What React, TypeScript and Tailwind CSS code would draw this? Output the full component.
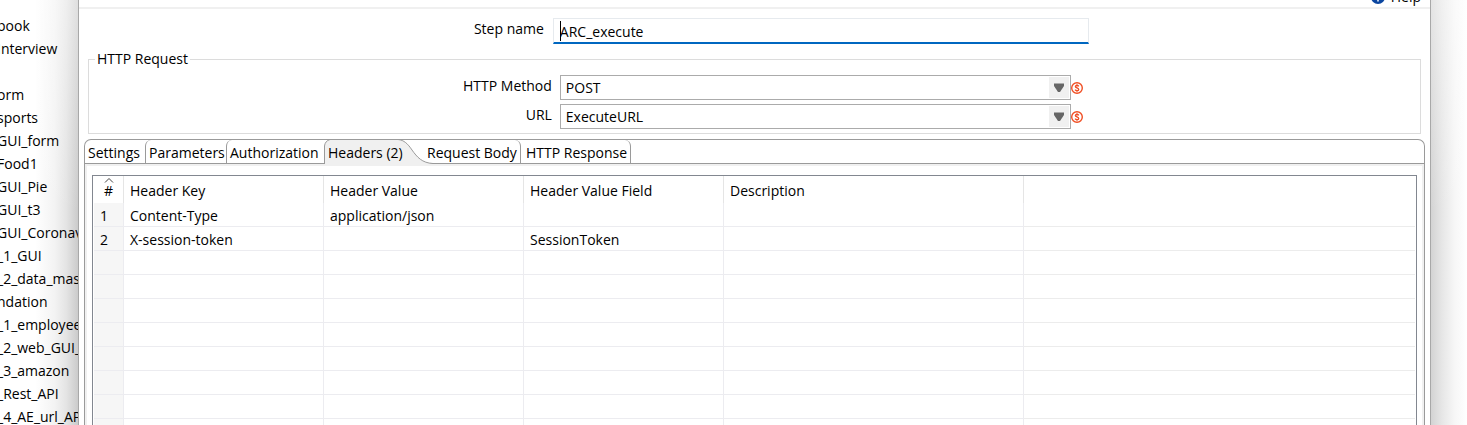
import { useState } from "react";
import type { ReactNode } from "react";

const files = [
  "book",
  "Interview",
  "",
  "orm",
  "sports",
  "GUI_form",
  "Food1",
  "GUI_Pie",
  "GUI_t3",
  "GUI_Coronavirus",
  "_1_GUI",
  "_2_data_master",
  "ndation",
  "_1_employee",
  "_2_web_GUI_form",
  "_3_amazon",
  "_Rest_API",
  "_4_AE_url_API",
];

const headers = ["Header Key", "Header Value", "Header Value Field", "Description"];

const rows = [
  ["Content-Type", "application/json", "", ""],
  ["X-session-token", "", "SessionToken", ""],
  ...Array.from({ length: 8 }, () => ["", "", "", ""]),
];

function Combo({ id, label, value }: { id: string; label: string; value: string }) {
  return (
    <div className="flex items-start">
      <label htmlFor={id} className="w-[35%] shrink-0 pr-[3px] text-right leading-[22px]">
        {label}
      </label>
      <div className="flex min-w-0 items-center pl-[5px]">
        <div className="relative w-[511px]">
          <select
            id={id}
            defaultValue={value}
            className="block h-[25px] w-full appearance-none border border-[#ababab] bg-white pl-[5px] outline-none"
          >
            <option>{value}</option>
          </select>
          <span className="pointer-events-none absolute inset-y-[2px] right-[2px] flex w-5 items-center justify-center bg-[#f0f0f0]">
            <svg width="12" height="10" viewBox="0 0 12 10" aria-hidden="true">
              <path d="M1 .5H11V3L7 9H5L1 3Z" fill="#666" />
            </svg>
          </span>
        </div>
        <svg width="12" height="12" viewBox="0 0 12 12" fill="none" stroke="#f04e23" aria-hidden="true">
          <circle cx="6" cy="6" r="5.300" strokeWidth="1.400" />
          <path
            d="M7.800 4.300C7.400 3.700 6.800 3.500 6 3.500C5 3.500 4.400 4 4.400 4.600C4.400 6.300 7.700 5.600 7.700 7.400C7.700 8.200 7 8.600 6 8.600C5.200 8.600 4.500 8.300 4.100 7.700M6 2.200V3.500M6 8.600V9.800"
            strokeWidth="1.400"
          />
        </svg>
      </div>
    </div>
  );
}

function Tab({ className, selected = false, children }: { className: string; selected?: boolean; children: ReactNode }) {
  return (
    <button
      role="tab"
      aria-selected={selected}
      className={`relative h-full shrink-0 border-[#9a9a9a] pt-[2px] text-left whitespace-nowrap ${className}`}
    >
      {children}
    </button>
  );
}

export default function App() {
  const [name, setName] = useState("ARC_execute");
  return (
    <div className="flex h-screen overflow-hidden bg-white font-['Open_Sans','Noto_Sans',sans-serif] text-[14px] leading-[20px] text-black">
      <aside className="w-[78px] shrink-0 overflow-hidden bg-[linear-gradient(to_bottom,rgba(255,255,255,0.4),transparent_50%),linear-gradient(to_right,#fff_45%,#f3f3f3_70%,#e4e4e4_85%,#cbcbcb)] pt-[14px]">
        <ul className="-ml-[3px]">
          {files.map((f, i) => (
            <li key={i} className="h-[23px] leading-[23px] whitespace-nowrap">
              {f}
            </li>
          ))}
        </ul>
      </aside>

      <main className="flex min-w-0 flex-1 flex-col border-x border-[#a8a8a8]">
        <header className="flex h-[9px] shrink-0 items-end justify-end overflow-hidden border-b-2 border-[#f0f0f0] pr-[9px]">
          <button className="flex items-center gap-[6px] leading-[20px]">
            <svg width="14" height="14" viewBox="0 0 14 14" aria-hidden="true">
              <circle cx="7" cy="7" r="7" fill="#0b46a0" />
              <path d="M5 5a2 2 0 1 1 3 1.800q-1 .5-1 1.700M7 10v1.500" fill="none" stroke="#fff" strokeWidth="1.500" />
            </svg>
            Help
          </button>
        </header>

        <div className="flex items-start pt-[9px]">
          <label htmlFor="step" className="w-[35%] shrink-0 pr-2 text-right leading-[22px]">
            Step name
          </label>
          <div className="relative ml-px w-[536px]">
            <input
              id="step"
              value={name}
              onChange={(e) => setName(e.target.value)}
              className="block h-[26px] w-full border border-b-2 border-[#e6eaee] border-b-[#0067c0] bg-white pt-[2px] pl-[6px] outline-none"
            />
            <span className="absolute top-[3px] left-[7px] h-[20px] w-px bg-black" />
          </div>
        </div>

        <fieldset className="mx-[9px] mt-[5px] border border-[#dcdcdc] pb-1">
          <legend className="ml-[6px] px-[2px]">HTTP Request</legend>
          <div className="flex flex-col gap-1 pt-[6px]">
            <Combo id="method" label="HTTP Method" value="POST" />
            <Combo id="url" label="URL" value="ExecuteURL" />
          </div>
        </fieldset>

        <section className="mx-[5px] mt-[5px] flex min-h-0 flex-1 flex-col overflow-hidden rounded-t-[7px] border border-b-0 border-[#9a9a9a]">
          <div role="tablist" className="flex h-6 shrink-0 border-b border-[#9a9a9a]">
            <Tab className="w-[60px] pl-[3px]">Settings</Tab>
            <Tab className="w-[81px] rounded-tl-[6px] border-l pl-[3px]">Parameters</Tab>
            <Tab className="w-[98px] rounded-tl-[6px] border-l pl-[3px]">Authorization</Tab>
            <Tab selected className="w-[102px] pl-1">
              <svg className="absolute top-0 left-0" width="112" height="24" viewBox="0 0 112 24" aria-hidden="true">
                <path d="M.5 24V6Q1 1 6 -.5H74C80 0 84 4 88 10C93 17 98 23 109 23.500V24Z" fill="#f0f0f0" />
                <path d="M.5 24V6Q1 1 6 -.5M74 -.5C80 0 84 4 88 10C93 17 98 23 109 23.500" fill="none" stroke="#9a9a9a" />
              </svg>
              <span className="relative">Headers (2)</span>
            </Tab>
            <Tab className="w-[95px] rounded-tr-[6px] border-r pl-[1px]">Request Body</Tab>
            <Tab className="w-[110px] rounded-tr-[6px] border-r pl-[5px]">HTTP Response</Tab>
          </div>

          <div className="min-h-0 flex-1 border-x-2 border-t-2 border-[#f0f0f0] px-[5px] pt-[9px]">
            <div className="h-full overflow-hidden border border-b-0 border-[#828790] px-px">
              <table className="w-full table-fixed border-separate border-spacing-0 text-left">
                <colgroup>
                  <col className="w-[30px]" />
                  <col className="w-[200px]" />
                  <col className="w-[200px]" />
                  <col className="w-[200px]" />
                  <col className="w-[300px]" />
                  <col />
                </colgroup>
                <thead>
                  <tr className="h-[27px]">
                    <th className="relative border-r border-[#e5e5e5] p-0 pt-[2px] text-center font-normal">
                      <svg className="absolute top-[2px] left-[10px]" width="10" height="5" viewBox="0 0 10 5" aria-hidden="true">
                        <path d="M1 4.500L5 .5L9 4.500" fill="none" stroke="#444" />
                      </svg>
                      #
                    </th>
                    {headers.map((h) => (
                      <th key={h} className="border-r border-[#e5e5e5] p-0 pt-[2px] pl-[6px] font-normal">
                        {h}
                      </th>
                    ))}
                    <th className="p-0" />
                  </tr>
                </thead>
                <tbody>
                  {rows.map((r, i) => (
                    <tr key={i} className="h-6">
                      <td className="border-r border-b border-[#ececf0] bg-[#f6f6f6] p-0 pt-[2px] pl-[6px]">{r[0] ? i + 1 : ""}</td>
                      {r.map((c, j) => (
                        <td key={j} className="border-r border-b border-[#ececf0] p-0 pt-[2px] pl-[6px]">
                          {c}
                        </td>
                      ))}
                      <td className="border-b border-[#ececec] p-0" />
                    </tr>
                  ))}
                </tbody>
              </table>
            </div>
          </div>
        </section>
      </main>

      <div className="w-[36px] shrink-0 bg-[linear-gradient(to_bottom,rgba(255,255,255,0.4),transparent_50%),linear-gradient(to_right,#d3d3d3,#e6e6e6_30%,#f6f6f6_65%,#fff)]" />
    </div>
  );
}
